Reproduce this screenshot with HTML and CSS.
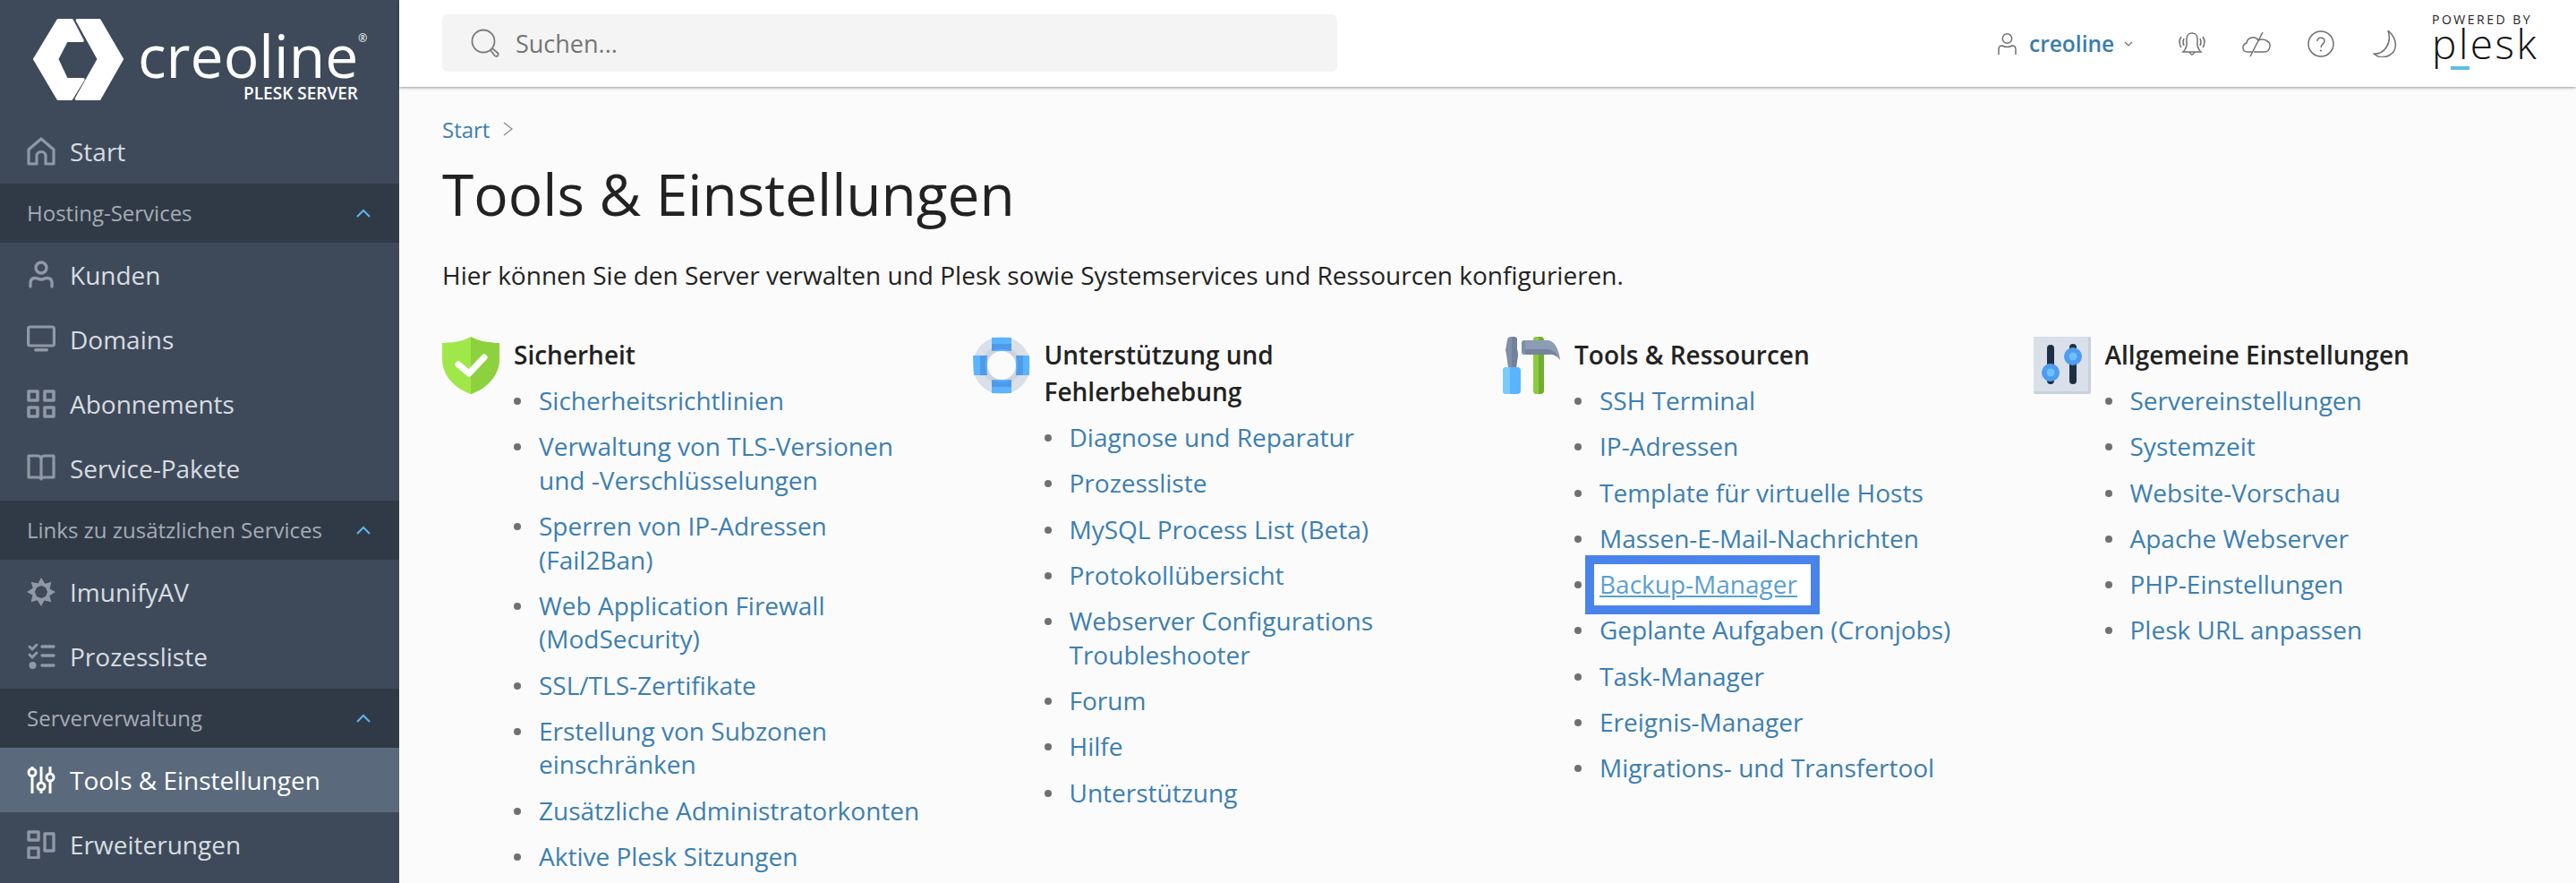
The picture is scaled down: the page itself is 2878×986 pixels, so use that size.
FILE: index.html
```html
<!DOCTYPE html>
<html lang="de">
<head>
<meta charset="utf-8">
<title>Tools &amp; Einstellungen</title>
<link rel="stylesheet" href="styles.css">
</head>
<body>
<div class="app">
  <aside class="sidebar">
    <div class="brand">
      <svg class="brand-mark" viewBox="0 0 303 273"><g fill="#fff" stroke="#fff" stroke-width="10" stroke-linejoin="round"><path d="M84 5H130L165 73H112L80 135L112 203H168L128 268H84L5 135Z"/><path d="M148 5H222L298 135L222 268H145L220 135Z"/></g></svg>
      <div class="brand-text">
        <div class="brand-name">creoline<span class="brand-reg">®</span></div>
        <div class="brand-sub">PLESK SERVER</div>
      </div>
    </div>
    <nav class="nav">
      <a class="nav-item"><svg class="nav-icon" viewBox="0 0 32 32"><path d="M2 30V14L16 2L30 14V30H21V21C21 15 11 15 11 21V30Z" fill="none" stroke="#8f98a4" stroke-width="3.2" stroke-linejoin="round"/></svg>Start</a>
      <div class="nav-section"><span>Hosting-Services</span><svg class="chev" viewBox="0 0 16 10"><path d="M1 9L8 2L15 9" fill="none" stroke="#5fb5ea" stroke-width="2"/></svg></div>
      <a class="nav-item"><svg class="nav-icon" viewBox="0 0 32 32"><g fill="none" stroke="#8f98a4" stroke-width="3.4" stroke-linecap="round"><circle cx="16" cy="8" r="6"/><path d="M4 29V25C4 19 9 19 12 20Q16 22 20 20C23 19 28 19 28 25V29"/></g></svg>Kunden</a>
      <a class="nav-item"><svg class="nav-icon" viewBox="0 0 32 32"><rect x="1.6" y="2" width="28.8" height="21" rx="2" fill="none" stroke="#8f98a4" stroke-width="3.2"/><rect x="8" y="26" width="16" height="3.4" rx="1.7" fill="#8f98a4"/></svg>Domains</a>
      <a class="nav-item"><svg class="nav-icon" viewBox="0 0 32 32"><g fill="none" stroke="#8f98a4" stroke-width="3.6" stroke-linejoin="round"><rect x="2" y="2" width="10" height="10"/><rect x="20" y="2" width="10" height="10"/><rect x="2" y="20" width="10" height="10"/><rect x="20" y="20" width="10" height="10"/></g></svg>Abonnements</a>
      <a class="nav-item"><svg class="nav-icon" viewBox="0 0 32 32"><path d="M2 2H12Q16 2 16 6V28Q16 26 12 26H2ZM30 2H20Q16 2 16 6V28Q16 26 20 26H30Z" fill="none" stroke="#8f98a4" stroke-width="3.2" stroke-linejoin="round"/></svg>Service-Pakete</a>
      <div class="nav-section"><span>Links zu zusätzlichen Services</span><svg class="chev" viewBox="0 0 16 10"><path d="M1 9L8 2L15 9" fill="none" stroke="#5fb5ea" stroke-width="2"/></svg></div>
      <a class="nav-item"><svg class="nav-icon" viewBox="0 0 32 32"><g fill="#8f98a4"><path d="M16 0L23 11L16 9L10 11Z"/><path d="M16 0L23 11L16 9L10 11Z" transform="rotate(45 16 16)"/><path d="M16 0L23 11L16 9L10 11Z" transform="rotate(90 16 16)"/><path d="M16 0L23 11L16 9L10 11Z" transform="rotate(135 16 16)"/><path d="M16 0L23 11L16 9L10 11Z" transform="rotate(180 16 16)"/><path d="M16 0L23 11L16 9L10 11Z" transform="rotate(225 16 16)"/><path d="M16 0L23 11L16 9L10 11Z" transform="rotate(270 16 16)"/><path d="M16 0L23 11L16 9L10 11Z" transform="rotate(315 16 16)"/></g></svg>ImunifyAV</a>
      <a class="nav-item"><svg class="nav-icon" viewBox="0 0 32 32"><g fill="none" stroke="#8f98a4" stroke-width="3" stroke-linecap="round"><path d="M3 5L6 8L11 3M3 14L6 17L11 12"/><path d="M17 5H30M17 15H30M17 26H30" stroke-width="3.4"/></g><circle cx="6.500" cy="26" r="4" fill="#8f98a4"/></svg>Prozessliste</a>
      <div class="nav-section"><span>Serververwaltung</span><svg class="chev" viewBox="0 0 16 10"><path d="M1 9L8 2L15 9" fill="none" stroke="#5fb5ea" stroke-width="2"/></svg></div>
      <a class="nav-item active"><svg class="nav-icon" viewBox="0 0 32 32"><g fill="none" stroke="#fff" stroke-width="3"><path d="M6 13V31M6 1V3M16 1V19M16 27V31M26 1V9M26 17V31"/><circle cx="6" cy="7.500" r="4"/><circle cx="16" cy="23" r="4"/><circle cx="26" cy="13" r="4"/></g></svg>Tools &amp; Einstellungen</a>
      <a class="nav-item"><svg class="nav-icon" viewBox="0 0 32 32"><g fill="none" stroke="#8f98a4" stroke-width="3.4" stroke-linejoin="round"><rect x="2" y="2" width="11" height="9"/><rect x="2" y="20" width="11" height="11"/><rect x="20" y="4" width="10" height="19"/></g></svg>Erweiterungen</a>
    </nav>
  </aside>
  <div class="main">
    <header class="topbar">
      <div class="search">
        <svg class="search-icon" viewBox="0 0 32 32"><g fill="none" stroke="#7b7b7b" stroke-width="1.800"><circle cx="14" cy="14" r="12.500"/><path d="M22 24L27 30.500Q31 32 30.500 27.500L24 22"/></g></svg>
        <span class="search-text">Suchen...</span>
      </div>
      <div class="top-actions">
        <div class="user">
          <svg class="user-icon" viewBox="0 0 21 24"><g fill="none" stroke="#707070" stroke-width="1.500"><circle cx="10.500" cy="6" r="5.200"/><path d="M1 24V18Q1 14 5 14Q10.500 17 16 14Q20 14 20 18V24"/></g></svg>
          <span class="user-name">creoline</span>
          <svg class="user-chev" viewBox="0 0 10 6"><path d="M1 1L5 5L9 1" fill="none" stroke="#707070" stroke-width="1.200"/></svg>
        </div>
        <div class="tools">
          <svg class="tool" viewBox="0 0 34 30"><g fill="none" stroke="#707070" stroke-width="1.500"><path d="M7 24Q11 20 11 15V9C11 1 23 1 23 9V15Q23 20 27 24Z"/><path d="M14 24Q17 30 20 24M5 7Q1 13 5 19M8 9Q6 13 8 17M29 7Q33 13 29 19M26 9Q28 13 26 17"/></g></svg>
          <svg class="tool" viewBox="0 0 34 30"><g fill="none" stroke="#707070" stroke-width="1.500"><path d="M12 24H7C1 24 0 16 6 14C7 7 16 6 19 11C26 8 33 13 32 18Q31 24 26 24H14"/><path d="M24 2L10 29"/></g></svg>
          <svg class="tool" viewBox="0 0 34 30"><g fill="none" stroke="#707070" stroke-width="1.500"><circle cx="17" cy="15" r="14"/><path d="M13 12C13 7 21 7 21 12C21 15 17 15 17 19"/></g><circle cx="17" cy="22.500" r="1.100" fill="#707070"/></svg>
          <svg class="tool" viewBox="0 0 34 30"><path d="M20 0C31 10 31 23 21 28C15 31 9 30 4 26C15 27 25 15 20 0Z" fill="none" stroke="#707070" stroke-width="1.500" stroke-linejoin="round"/></svg>
        </div>
        <div class="plesk">
          <div class="plesk-by">POWERED BY</div>
          <div class="plesk-name">plesk</div>
        </div>
      </div>
    </header>
    <main class="content">
      <div class="crumbs"><a class="crumb">Start</a><svg class="crumb-sep" viewBox="0 0 11 16"><path d="M1 1L10 8L1 15" fill="none" stroke="#8a8a8a" stroke-width="1.300"/></svg></div>
      <h1 class="title">Tools &amp; Einstellungen</h1>
      <p class="intro">Hier können Sie den Server verwalten und Plesk sowie Systemservices und Ressourcen konfigurieren.</p>
      <div class="columns">
        <section class="col">
          <svg class="col-icon" viewBox="0 0 64 64"><path d="M32 0C41 5 52 7 64 7V25C64 43 50 58 32 64C14 58 0 43 0 25V7C12 7 23 5 32 0Z" fill="#a0e84a"/><path d="M32 0C41 5 52 7 64 7V25C64 43 50 58 32 64Z" fill="#8dd13f"/><path d="M18 31L30 41L47 23" fill="none" stroke="#fff" stroke-width="7" stroke-linecap="round" stroke-linejoin="round"/></svg>
          <div class="col-body">
            <h2 class="col-title">Sicherheit</h2>
            <ul class="links">
              <li><a>Sicherheitsrichtlinien</a></li>
              <li><a>Verwaltung von TLS-Versionen und -Verschlüsselungen</a></li>
              <li><a>Sperren von IP-Adressen (Fail2Ban)</a></li>
              <li><a>Web Application Firewall (ModSecurity)</a></li>
              <li><a>SSL/TLS-Zertifikate</a></li>
              <li><a>Erstellung von Subzonen einschränken</a></li>
              <li><a>Zusätzliche Administratorkonten</a></li>
              <li><a>Aktive Plesk Sitzungen</a></li>
            </ul>
          </div>
        </section>
        <section class="col">
          <svg class="col-icon" viewBox="0 0 64 64"><circle cx="32" cy="32" r="24" fill="none" stroke="#d9e0ea" stroke-width="16"/><circle cx="32" cy="32" r="19" fill="none" stroke="#cdd4e0" stroke-width="6"/><path d="M21 1H43V16H21ZM21 48H43V63H21ZM0 21H16V43H1ZM48 21H63V43H48Z" fill="#5ab4ff"/><path d="M21 8H43V16Q32 12 21 16ZM21 48Q32 52 43 48V56H21ZM8 21H16Q12 32 16 43H8ZM48 21H56V43H48Q52 32 48 21Z" fill="#4f9be8"/></svg>
          <div class="col-body">
            <h2 class="col-title">Unterstützung und Fehlerbehebung</h2>
            <ul class="links">
              <li><a>Diagnose und Reparatur</a></li>
              <li><a>Prozessliste</a></li>
              <li><a>MySQL Process List (Beta)</a></li>
              <li><a>Protokollübersicht</a></li>
              <li><a>Webserver Configurations Troubleshooter</a></li>
              <li><a>Forum</a></li>
              <li><a>Hilfe</a></li>
              <li><a>Unterstützung</a></li>
            </ul>
          </div>
        </section>
        <section class="col">
          <svg class="col-icon" viewBox="0 0 64 64"><path d="M5 4Q5 0 10 0H12Q16 0 16 4V14L17 20L15 34H6L4 20L3 15Z" fill="#7e8fa8"/><path d="M10 0H12Q16 0 16 4V14L17 20L15 34H10Z" fill="#71829a"/><rect x="0" y="34" width="20" height="30" rx="4" fill="#5ab4ff"/><path d="M0 38Q0 34 4 34H8V64H4Q0 64 0 60Z" fill="#78ccff"/><rect x="34" y="0" width="12" height="64" rx="4" fill="#6fad2f"/><path d="M34 4Q34 0 38 0H40V64H38Q34 64 34 60Z" fill="#8bcb3e"/><rect x="21" y="4" width="6" height="16" rx="3" fill="#7e8fa8"/><path d="M25 4H50C58 4 63 15 64 26C60 20 55 19 50 20H25Z" fill="#8c9cb5"/><path d="M25 14H50C55 14 60 18 64 26C60 20 55 19 50 20H25Z" fill="#74849c"/></svg>
          <div class="col-body">
            <h2 class="col-title">Tools &amp; Ressourcen</h2>
            <ul class="links">
              <li><a>SSH Terminal</a></li>
              <li><a>IP-Adressen</a></li>
              <li><a>Template für virtuelle Hosts</a></li>
              <li><a>Massen-E-Mail-Nachrichten</a></li>
              <li><a class="highlight">Backup-Manager</a></li>
              <li><a>Geplante Aufgaben (Cronjobs)</a></li>
              <li><a>Task-Manager</a></li>
              <li><a>Ereignis-Manager</a></li>
              <li><a>Migrations- und Transfertool</a></li>
            </ul>
          </div>
        </section>
        <section class="col">
          <svg class="col-icon" viewBox="0 0 64 64"><rect width="64" height="64" rx="2" fill="#c8d0df"/><rect width="61" height="61" fill="#d9e0ea"/><rect x="15" y="9" width="8" height="44" rx="4" fill="#1e2f45"/><rect x="40" y="8" width="8" height="45" rx="4" fill="#1e2f45"/><circle cx="19" cy="40" r="10" fill="#4f9bef"/><circle cx="19" cy="40" r="4.500" fill="#6cc0ff"/><circle cx="44" cy="22" r="10" fill="#4f9bef"/><circle cx="44" cy="22" r="4.500" fill="#6cc0ff"/></svg>
          <div class="col-body">
            <h2 class="col-title">Allgemeine Einstellungen</h2>
            <ul class="links">
              <li><a>Servereinstellungen</a></li>
              <li><a>Systemzeit</a></li>
              <li><a>Website-Vorschau</a></li>
              <li><a>Apache Webserver</a></li>
              <li><a>PHP-Einstellungen</a></li>
              <li><a>Plesk URL anpassen</a></li>
            </ul>
          </div>
        </section>
      </div>
    </main>
  </div>
</div>
</body>
</html>
```
FILE: styles.css
```css
* { box-sizing: border-box; }
html, body { margin: 0; height: 100%; overflow: hidden; }
body { font-family: "Open Sans", "Liberation Sans", sans-serif; font-size: 28px; color: #222; background: #fbfbfb; }
.app { display: flex; height: 986px; overflow: hidden; }

.sidebar { width: 446px; flex: none; background: #3e4a5a; color: #d8dce1; }
.brand { height: 133px; display: flex; padding: 21px 0 0 37px; gap: 16px; }
.brand-mark { width: 101px; height: 91px; flex: none; }
.brand-text { width: 246px; color: #fff; display: flex; flex-direction: column; align-items: flex-end; }
.brand-name { font-size: 66px; font-weight: 500; line-height: 62px; margin-top: 9px; position: relative; align-self: flex-start; }
.brand-reg { font-size: 12px; position: absolute; left: 100%; top: 6px; line-height: 14px; }
.brand-sub { font-size: 19px; font-weight: 600; line-height: 20px; margin-top: 2px; }
.nav { display: flex; flex-direction: column; }
.nav-item { height: 72px; flex: none; display: flex; align-items: center; gap: 16px; padding: 0 0 1px 30px; font-size: 28px; color: #d8dce1; }
.nav-item.active { background: #5a6a7c; color: #fff; }
.nav-icon { width: 32px; height: 32px; flex: none; }
.nav-section { height: 66px; flex: none; background: #303a47; color: #a5acb5; font-size: 24px; display: flex; align-items: center; justify-content: space-between; padding: 0 32px 1px 30px; }
.chev { width: 16px; height: 10px; }

.main { flex: 1; min-width: 0; display: flex; flex-direction: column; }
.topbar { height: 97px; flex: none; background: #fff; display: flex; align-items: center; justify-content: space-between; padding: 0 45px 0 48px; box-shadow: 0 1px 3px rgba(0,0,0,.4); position: relative; }
.search { width: 1000px; height: 64px; margin-top: -1px; background: #f4f4f4; border-radius: 6px; display: flex; align-items: center; padding-left: 32px; gap: 18px; }
.search-icon { width: 32px; height: 32px; flex: none; }
.search-text { color: #757575; font-size: 27px; }
.top-actions { display: flex; align-items: center; align-self: stretch; }
.user { display: flex; align-items: center; width: 200px; }
.user-icon { width: 21px; height: 24px; flex: none; margin-right: 14px; }
.user-name { color: #3a7cb0; font-size: 24.500px; font-weight: 600; margin-right: 11px; }
.user-chev { width: 10px; height: 6px; flex: none; }
.tools { display: flex; gap: 38px; align-items: center; width: 285px; }
.tool { width: 34px; height: 30px; flex: none; }
.plesk { width: 116px; align-self: flex-start; padding-top: 17px; }
.plesk-by { font-size: 14px; letter-spacing: 2.500px; line-height: 10px; color: #222; white-space: nowrap; }
.plesk-name { font-size: 46px; font-weight: 300; line-height: 42px; letter-spacing: 2.500px; color: #111; position: relative; }
.plesk-name::after { content: ""; position: absolute; left: 21px; bottom: -9px; width: 21px; height: 4px; background: #5cbde8; }

.content { flex: 1; min-height: 0; padding: 32px 62px 0 48px; overflow: hidden; }
.crumbs { display: flex; align-items: center; gap: 15px; height: 30px; }
.crumb { color: #3c7fb1; font-size: 24px; }
.crumb-sep { width: 11px; height: 16px; }
.title { font-size: 64px; font-weight: 400; line-height: 88px; margin: 14px 0 0; color: #222; }
.intro { font-size: 28px; line-height: 38px; margin: 27px 0 0; color: #222; }
.columns { display: grid; grid-template-columns: repeat(4, 1fr); column-gap: 48px; margin-top: 50px; }
.col { display: flex; gap: 16px; min-width: 0; }
.col-icon { width: 64px; height: 64px; flex: none; }
.col-body { flex: 1; min-width: 0; }
.col-title { font-size: 28px; font-weight: 600; line-height: 41px; margin: 0; color: #222; }
.links { list-style: none; margin: 12px 0 0; padding: 0; }
.links li { display: flex; font-size: 28px; line-height: 37.500px; margin-bottom: 13.800px; }
.links li::before { content: ""; width: 8px; height: 8px; border-radius: 50%; background: #707070; flex: none; margin: 15px 20px 0 0; }
.links a { color: #3c7fb1; }
.links a.highlight { color: #5a9fd0; text-decoration: underline; background: #fff; border: 10px solid #4a83ec; padding: 4px 15px 4px 6px; margin: -14px 0 -14px -16px; position: relative; }
```
